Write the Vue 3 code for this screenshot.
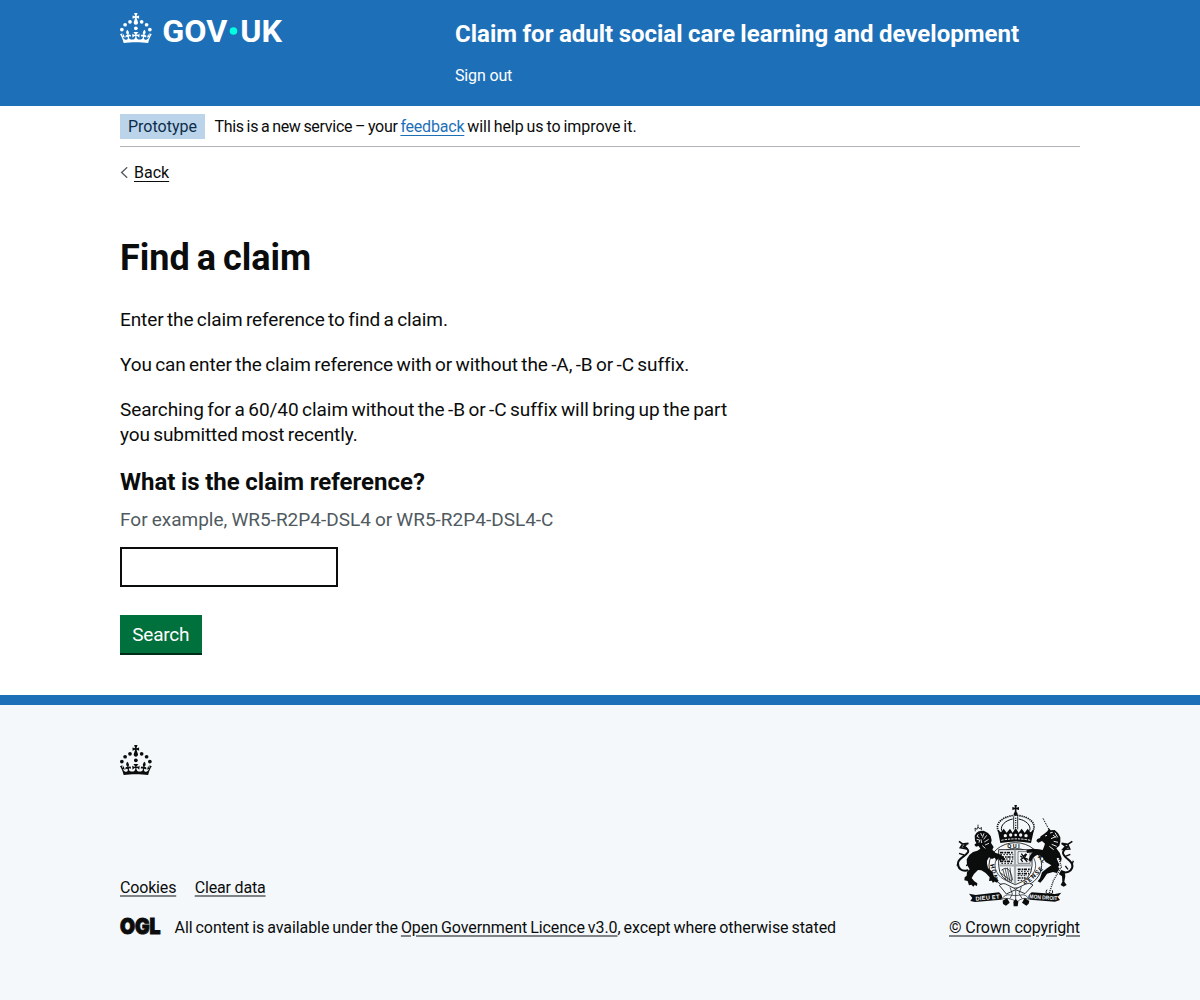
<script setup>
import { ref } from 'vue'

const reference = ref('')

const crown =
  'M33.1,9.8c.2-.1.3-.3.5-.5l4.6,2.4v-6.8l-4.6,1.5c-.1-.2-.3-.3-.5-.5l1.9-5.9h-6.7l1.9,5.9c-.2.1-.3.3-.5.5l-4.6-1.5v6.8l4.6-2.4c.1.2.3.3.5.5l-2.6,8c-.9,2.8,1.2,5.7,4.1,5.7h0c3,0,5.1-2.9,4.1-5.7l-2.6-8ZM37,37.9s-3.4,3.8-4.1,6.1c2.2,0,4.2-.5,6.4-2.8l-.7,8.5c-2-2.8-4.4-4.1-5.7-3.8.1,3.1.5,6.7,5.8,7.2,3.7.3,6.7-1.5,7-3.8.4-2.6-2-4.3-3.7-1.6-1.4-4.5,2.4-6.1,4.9-3.2-1.9-4.5-1.8-7.7,2.4-10.9,3,4,2.6,7.3-1.2,11.1,2.4-1.3,6.2,0,4,4.6-1.2-2.8-3.7-2.2-4.2.2-.3,1.7.7,3.7,3,4.2,1.9.3,4.7-.9,7-5.9-1.3,0-2.4.7-3.9,1.7l2.4-8c.6,2.3,1.4,3.7,2.2,4.5.6-1.6.5-2.8,0-5.3l5,1.8c-2.6,3.6-5.2,8.7-7.3,17.5-7.4-1.1-15.7-1.7-24.5-1.7h0c-8.8,0-17.1.6-24.5,1.7-2.1-8.9-4.7-13.9-7.3-17.5l5-1.8c-.5,2.5-.6,3.7,0,5.3.8-.8,1.6-2.3,2.2-4.5l2.4,8c-1.5-1-2.6-1.7-3.9-1.7,2.3,5,5.2,6.2,7,5.9,2.3-.4,3.3-2.4,3-4.2-.5-2.4-3-3.1-4.2-.2-2.2-4.6,1.6-6,4-4.6-3.7-3.7-4.2-7.1-1.2-11.1,4.2,3.2,4.3,6.4,2.4,10.9,2.5-2.8,6.3-1.3,4.9,3.2-1.8-2.7-4.1-1-3.7,1.6.3,2.3,3.3,4.1,7,3.8,5.4-.5,5.7-4.2,5.8-7.2-1.3-.2-3.7,1-5.7,3.8l-.7-8.5c2.2,2.3,4.2,2.7,6.4,2.8-.7-2.3-4.1-6.1-4.1-6.1h10.6,0Z'

const pearls = [
  [20, 17.6],
  [10.2, 23.5],
  [3.7, 33.2],
  [31.7, 30.6],
  [43.3, 17.6],
  [53.2, 23.5],
  [59.7, 33.2],
]
</script>

<template>
  <header class="header">
    <div class="container header-row">
      <a class="header-logo" href="#" aria-label="GOV.UK">
        <svg class="logotype" viewBox="0 0 324 60" width="162" height="30">
          <circle v-for="(p, i) in pearls" :key="i" :cx="p[0]" :cy="p[1]" r="3.7" />
          <path :d="crown" />
          <circle class="dot" cx="227" cy="36" r="7.6" />
          <text class="word" x="84.5" y="58" textLength="130" lengthAdjust="spacingAndGlyphs">GOV</text>
          <text class="word" x="240.5" y="58" textLength="83.5" lengthAdjust="spacingAndGlyphs">UK</text>
        </svg>
      </a>
      <div class="header-content">
        <a class="service-name" href="#">Claim for adult social care learning and development</a>
        <nav><a class="sign-out" href="#">Sign out</a></nav>
      </div>
    </div>
  </header>

  <div class="container">
    <div class="phase">
      <strong class="tag">Prototype</strong>
      <span class="phase-text"><span class="tight">This is a new service – your </span><a class="link" href="#">feedback</a> will help us to improve it.</span>
    </div>
    <a class="back" href="#">
      <svg width="8" height="12" viewBox="0 0 8 12"><path d="M7.2 .3L1.6 5.5L7.2 10.7" /></svg>
      <span>Back</span>
    </a>

    <main class="main">
      <h1>Find a claim</h1>
      <p>Enter the claim reference to find a claim.</p>
      <p>You can enter the claim reference with or without the -A, -B or -C suffix.</p>
      <p><span class="wide">Searching for a 60/40 claim without the -B or -C suffix will bring up the part</span> you submitted most recently.</p>
      <form @submit.prevent>
        <label for="claim-reference">What is the claim reference?</label>
        <div class="hint">For example, WR5-R2P4-DSL4 or WR5-R2P4-DSL4-C</div>
        <input id="claim-reference" v-model="reference" type="text" />
        <button type="submit">Search</button>
      </form>
    </main>
  </div>

  <footer class="footer">
    <div class="container">
      <svg class="footer-crown" viewBox="0 0 64 60" width="32" height="30">
        <circle v-for="(p, i) in pearls" :key="i" :cx="p[0]" :cy="p[1]" r="3.7" />
        <path :d="crown" />
      </svg>
      <div class="footer-row">
        <div class="footer-meta">
          <ul class="footer-links">
            <li><a href="#">Cookies</a></li>
            <li><a href="#">Clear data</a></li>
          </ul>
          <div class="licence">
            <svg class="ogl" width="41" height="17" viewBox="0 0 41 17">
              <text x="0" y="15.8" textLength="40.5" lengthAdjust="spacingAndGlyphs">OGL</text>
            </svg>
            <span>All content is available under the <a href="#">Open Government Licence v3.0</a>, except where otherwise stated</span>
          </div>
        </div>
        <a class="copyright" href="#">
          <svg class="arms" viewBox="0 0 372 324" width="124" height="108">
            <!-- crown -->
            <path d="M184 9h8l-2 8 8-2v9l-8-2 1 10h-6l1-10-8 2v-9l8 2z" />
            <circle cx="188" cy="36" r="6" />
            <g class="line">
              <path stroke-width="5" stroke-dasharray="4 2.5" d="M137 88C123 65 150 43 184 40M192 40C229 43 253 65 239 88" />
              <path stroke-width="3" d="M146 86C141 70 158 55 179 51M197 51C219 55 235 70 230 86" />
              <path stroke-width="2.5" d="M182 43V82M194 43V82" />
              <path stroke-width="4" stroke-dasharray="3 4" d="M188 47V80" />
            </g>
            <path d="M134 83l10 8 8-11 9 12 10-12 8 12 9-14 9 14 9-12 9 12 9-12 8 11 11-8-9 40Q188 114 142 123z" />
            <g class="paper">
              <circle cx="157" cy="101" r="5" /><circle cx="173" cy="99" r="5" />
              <circle cx="188" cy="99" r="4" /><circle cx="203" cy="99" r="5" />
              <circle cx="219" cy="101" r="5" />
            </g>
            <path class="paper-line" stroke-width="3" stroke-dasharray="7 3" d="M145 115Q188 106 232 115" />
            <!-- garter -->
            <ellipse class="paper" cx="187" cy="190" rx="79" ry="68" />
            <g class="line">
              <ellipse cx="187" cy="190" rx="79" ry="68" stroke-width="2.5" />
              <ellipse cx="187" cy="190" rx="61" ry="51" stroke-width="2" />
            </g>
            <g class="motto">
              <text x="163" y="138">QUI</text>
              <text transform="translate(240 150) rotate(48)">MAL</text>
              <text transform="translate(111 188) rotate(76)">HONI</text>
              <text transform="translate(219 252) rotate(-44)">PENSE</text>
            </g>
            <!-- shield -->
            <path class="paper" d="M137 143H237V190Q237 232 187 248Q137 232 137 190z" />
            <g class="line">
              <path stroke-width="2.5" d="M137 143H237V190Q237 232 187 248Q137 232 137 190z" />
              <path class="grey" stroke-width="7" d="M186 143V246M138 190H236" />
              <path stroke-width="5" stroke-dasharray="10 3 5 2" d="M141 152H181M143 165H181M141 178H181" />
              <path stroke-width="3" stroke-dasharray="5 4" d="M142 158H181M141 171H181M145 184H181" />
              <path stroke-width="1.6" d="M195 149H231V184H195z" />
              <path stroke-width="4" d="M205 155l6 8 9-8M221 156l-7 12 11 4M214 165l-10 7 5 8M213 169l10 10M202 162l6 4" />
              <path stroke-width="2" d="M149 201l10 33M156 198l9 39M163 197l8 43M171 197l5 43M145 205q14-12 24 0q8 14 10 30M143 213l31 23" />
              <path stroke-width="5" stroke-dasharray="9 3 5 2" d="M194 202H233M194 215H228M194 228H218" />
              <path stroke-width="3" stroke-dasharray="5 4" d="M195 208H232M194 221H222M194 235H208" />
            </g>
            <!-- lion -->
            <path d="M65 101l5-8 7-5 15-2 13 7 8 9 3 13-2 8 8 12-4 8 9 9 17 6 14 14-8 5-4-6-4 8-6-10-5 8-6-10-8 4-9-5-6 10 0 9 3 13 13 11 5 15 10 6 3 7-6 5-5-5-5 6-4-7-8 1 2-11-12-13-13-8-10-1-12 12-7 12 8 10 9 6-1 8-7-3-4 5-6-6-7 2-4-13-10-2 1-9 6-5 1-11 8-8-8-13-1-17 8-13 11-9 13-4 9-6-5-8-8 2-5-6 6-5-4-7z" />
            <path class="paper-line" stroke-width="2.6" d="M76 97l-4 6 7 4M83 93l4 9M93 94l-5 13M101 100l-9 12M107 112l-13 8M108 124l-12 5M71 112l9 2-2 8M84 112l2 11M88 131l9 8" />
            <path class="line" stroke-width="2.5" d="M67 88l-1-10 6 4 3-8 5 7 5-5 0 9M75 73V68" />
            <g class="line">
              <path stroke-width="6" d="M46 205C25 210 14 198 15 183C17 167 37 164 45 151C49 143 40 137 32 132" />
              <path stroke-width="5" d="M18 118l10 8 18-2-14 9 10 8-20-4 6-9" />
              <path stroke-width="4" d="M33 159l-15-5M15 184l-3 7M40 192l8-12" />
            </g>
            <!-- unicorn -->
            <path d="M263 103l10-7 10-8 5-9 5 6 12-1 10 9 7 13 0 13-3 12-9 8 10 13 6 17-3 17-8 9 10 9 10 4 2 15-3 16 7 10-9 5-9-5 5-10-1-16-13-9-14-4-18 5-11 17-9 10-8-4 7-9 6-18 15-12 13-9-17-10-12-17-14-5-12 9-6 12-8-4 5-14 8-10-17 2-2-8 18-5 20 2 11 2 4-10 3-9-9-8-11 5-6-5 3-6 8-3z" />
            <path class="paper-line" stroke-width="2.8" d="M291 93l8-2M300 99l10 8M294 110l14-6M306 92l8 14M302 118l13 3M296 127l15 6M289 133l13 10M276 102l6-2" />
            <path class="line" stroke-width="3" stroke-dasharray="5 3" d="M270 49L287 81" />
            <g class="line">
              <path stroke-width="6" d="M328 210C351 216 362 198 357 186C353 173 329 166 330 151C332 143 339 139 345 132" />
              <path stroke-width="5" d="M358 118l-14 9-18-3 12 9-8 9 20-1-5-12" />
              <path stroke-width="4" d="M335 164l17-7M358 185l3-9M345 202l-8-10" />
              <path class="paper-line" stroke-width="7" d="M314 168L326 195L302 236L294 270" />
              <path stroke-width="4" stroke-dasharray="3 3" d="M317 165L325 195L301 236L289 273" />
              <path stroke-width="3" d="M282 263q-8 12 6 13q14 2 10-11" />
            </g>
            <!-- motto ribbon -->
            <path class="paper" d="M139 250L163 275L188 260L215 277L241 249L222 244L188 259L158 243z" />
            <g class="line">
              <path stroke-width="2.5" d="M139 250Q150 240 164 249L188 261L216 247Q230 239 240 249L216 275L188 263L160 276z" />
              <path stroke-width="2" d="M171 256l7 20-7 13M205 254l-7 21 9 14M188 264V298" />
              <path stroke-width="2" d="M145 292q12-17 27-13q14 4 31 0q15-4 26 13q-20-9-37 8q-26-17-47-8" />
            </g>
            <path d="M48 275L68 279L138 271Q153 283 144 293L66 300L52 297L58 288z" />
            <path d="M325 272L306 276L236 271Q219 283 231 293L306 299L321 294L314 285z" />
            <path d="M149 296l13-8 8 14-11 9-9-5zM229 297l-14-9-8 14 13 9 7-6zM181 299l7-8 8 8-2 14h-12z" />
            <g class="ribbon">
              <text transform="translate(68 296) rotate(-5)" textLength="72">DIEU ET</text>
              <text transform="translate(229 289) rotate(4)" textLength="84" lengthAdjust="spacingAndGlyphs">MON DROIT</text>
            </g>
          </svg>
          <span>© Crown copyright</span>
        </a>
      </div>
    </div>
  </footer>
</template>

<style>
body {
  background: #f4f8fb;
}

#app {
  background: #fff;
  color: #0b0c0c;
  font-family: Roboto, "Liberation Sans", sans-serif;
  font-size: 16px;
  line-height: 20px;
}
</style>

<style scoped>
a {
  color: inherit;
}

.container {
  width: 960px;
  margin: 0 auto;
}

.header {
  height: 106px;
  background: #1d70b8;
  color: #fff;
}

.header a {
  text-decoration: none;
}

.header-row {
  display: flex;
}

.header-logo {
  width: 335px;
  padding-top: 13px;
}

.logotype {
  display: block;
  fill: #fff;
  overflow: visible;
}

.logotype .dot {
  fill: #00ffe0;
}

.word {
  font: 700 61px Roboto, sans-serif;
}

.header-content {
  padding-top: 19px;
}

.service-name {
  display: block;
  font-size: 24px;
  font-weight: 700;
  line-height: 30px;
  word-spacing: -0.5px;
}

.sign-out {
  display: block;
  margin-top: 17px;
  letter-spacing: -0.15px;
}

.phase {
  display: flex;
  align-items: center;
  height: 40px;
  border-bottom: 1px solid #b1b4b6;
}

.tag {
  height: 25px;
  padding: 0 8px;
  background: #bbd4ea;
  color: #0c2d4a;
  font-weight: 400;
  line-height: 25px;
}

.phase-text {
  margin-left: 9.5px;
  padding-top: 2px;
  letter-spacing: -0.05px;
  word-spacing: -1px;
  white-space: nowrap;
}

.tight {
  letter-spacing: -0.29px;
  word-spacing: -0.9px;
}

.link {
  color: #1d70b8;
  letter-spacing: -0.2px;
}

.phase-text a,
.back span {
  text-decoration-thickness: 1px;
  text-underline-offset: 3px;
}

.footer a {
  text-decoration-thickness: 2px;
  text-decoration-color: #808385;
  text-underline-offset: 2px;
}

.back {
  display: flex;
  align-items: center;
  gap: 6px;
  width: 50px;
  margin-top: 16px;
  text-decoration: none;
}

.back svg {
  fill: none;
  stroke: #505a5f;
  stroke-width: 1.3;
}

.back span {
  text-decoration: underline;
}

.main {
  width: 630px;
  padding-top: 50px;
  font-size: 19px;
  line-height: 25px;
}

h1 {
  margin: 0 0 24px;
  font-size: 36px;
  line-height: 50px;
  word-spacing: -2px;
}

p {
  margin: 0 0 20px;
  letter-spacing: -0.1px;
  word-spacing: -1.2px;
}

.wide {
  letter-spacing: -0.04px;
}

label {
  display: block;
  margin-bottom: 10px;
  font-size: 24px;
  font-weight: 700;
  line-height: 30px;
  word-spacing: -0.4px;
}

.hint {
  color: #505a5f;
  word-spacing: -0.6px;
}

input {
  display: block;
  box-sizing: border-box;
  width: 218.4px;
  height: 40px;
  margin: 15px 0 28px;
  padding: 5px;
  border: 2px solid #0b0c0c;
  border-radius: 0;
  font: inherit;
}

button {
  display: block;
  width: 81.6px;
  height: 38px;
  margin-bottom: 42px;
  padding: 0;
  border: 0;
  background: #00703c;
  box-shadow: 0 2px 0 #002d18;
  color: #fff;
  font: inherit;
  letter-spacing: -0.2px;
}

.footer {
  height: 305px;
  box-sizing: border-box;
  border-top: 10px solid #1d70b8;
  padding-top: 40px;
  background: #f4f8fb;
}

.footer-crown {
  display: block;
  fill: #0b0c0c;
}

.footer-row {
  display: flex;
  justify-content: space-between;
  align-items: flex-end;
  margin-top: 27px;
}

.footer-links {
  display: flex;
  gap: 18.5px;
  margin: 0 0 20px;
  padding: 0;
  list-style: none;
  letter-spacing: -0.17px;
}

.licence {
  display: flex;
  align-items: center;
  gap: 13.5px;
  letter-spacing: -0.06px;
  word-spacing: -0.95px;
}

.ogl {
  margin-top: -4px;
  overflow: visible;
}

.ogl text {
  font: 900 21.5px Inter, sans-serif;
  fill: #0b0c0c;
  stroke: #0b0c0c;
  stroke-width: 1;
}

.copyright {
  display: flex;
  flex-direction: column;
  align-items: center;
  gap: 8px;
  width: 131px;
  letter-spacing: -0.09px;
  white-space: nowrap;
}

.arms {
  display: block;
  fill: #0b0c0c;
}

.line {
  fill: none;
  stroke: #0b0c0c;
}

.line .grey {
  stroke: #a9adb0;
}

.paper {
  fill: #f4f8fb;
}

.paper-line,
.line .paper-line {
  fill: none;
  stroke: #f4f8fb;
}

.motto {
  font: 700 18px Roboto, sans-serif;
  letter-spacing: 4px;
}

.ribbon {
  fill: #f4f8fb;
  font: 700 17px "Liberation Sans", sans-serif;
}
</style>
